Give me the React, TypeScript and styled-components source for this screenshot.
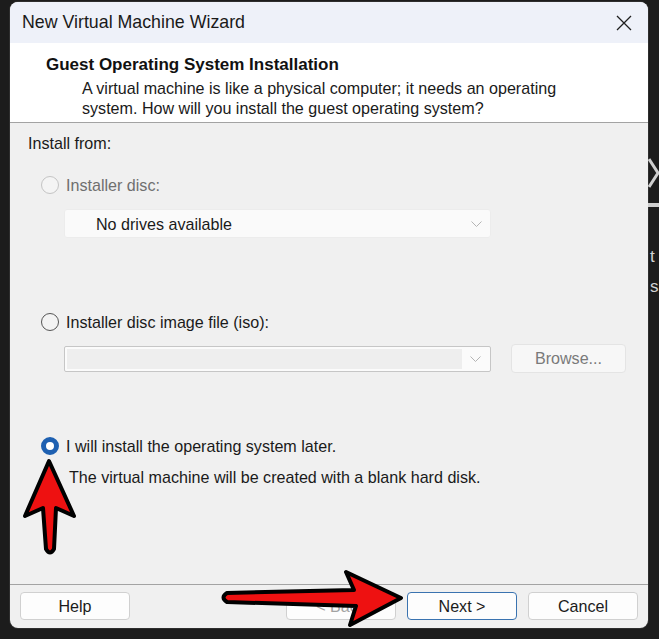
import React from "react";
import styled, { createGlobalStyle, css } from "styled-components";

const GlobalStyle = createGlobalStyle`
  html, body {
    margin: 0;
    padding: 0;
    background: #1c1c1c;
  }
  body {
    font-family: "Liberation Sans", Arial, sans-serif;
  }
`;

export default function App() {
  return (
    <>
      <GlobalStyle />
      <Page>
        <Dialog>
          <TitleBar>
            <WindowTitle>New Virtual Machine Wizard</WindowTitle>
            <CloseButton aria-label="Close">
              <svg width="16" height="16" viewBox="0 0 16 16">
                <path d="M1 1L15 15M15 1L1 15" stroke="#1f1f1f" strokeWidth="1.3" fill="none" />
              </svg>
            </CloseButton>
          </TitleBar>

          <Header>
            <HeaderTitle>Guest Operating System Installation</HeaderTitle>
            <HeaderText>
              A virtual machine is like a physical computer; it needs an operating
              <br />
              system. How will you install the guest operating system?
            </HeaderText>
          </Header>
          <Divider />

          <Content>
            <SectionLabel>Install from:</SectionLabel>

            <RadioRow $top={22}>
              <Radio $state="disabled" />
              <RadioLabel $disabled>Installer disc:</RadioLabel>
            </RadioRow>
            <DriveSelect>
              <span>No drives available</span>
              <Chevron />
            </DriveSelect>

            <RadioRow $top={74}>
              <Radio $state="off" />
              <RadioLabel>Installer disc image file (iso):</RadioLabel>
            </RadioRow>
            <FileRow>
              <IsoCombo>
                <IsoField />
                <ComboArrow>
                  <Chevron />
                </ComboArrow>
              </IsoCombo>
              <BrowseButton disabled>Browse...</BrowseButton>
            </FileRow>

            <RadioRow $top={63}>
              <Radio $state="on" />
              <RadioLabel>I will install the operating system later.</RadioLabel>
            </RadioRow>
            <Note>The virtual machine will be created with a blank hard disk.</Note>
          </Content>

          <Divider />
          <Footer>
            <Button>Help</Button>
            <ButtonGroup>
              <Button disabled>&lt; Back</Button>
              <Button $primary>Next &gt;</Button>
              <Button>Cancel</Button>
            </ButtonGroup>
          </Footer>
        </Dialog>

        <SideStrip>
          <svg width="11" height="30" viewBox="0 0 11 30">
            <path d="M1 1L10 15L1 29" stroke="#cfcfcf" strokeWidth="3" fill="none" />
          </svg>
          <SideBar />
          <SideGlyph $top={42}>t</SideGlyph>
          <SideGlyph $top={14}>s</SideGlyph>
        </SideStrip>

        <Annotations width="659" height="639" viewBox="0 0 659 639">
          <path
            d="M49 461L74 516L56 508L54 549Q50 556 46 549L43 508L25 516Z"
            fill="#ee1111"
            stroke="#000"
            strokeWidth="4"
            strokeLinejoin="round"
          />
          <path
            d="M401 598L350 625L356 606L227 602Q220 597.5 227 593L354 590L346 572Z"
            fill="#ee1111"
            stroke="#000"
            strokeWidth="4"
            strokeLinejoin="round"
          />
        </Annotations>
      </Page>
    </>
  );
}

function Chevron() {
  return (
    <svg width="11" height="6" viewBox="0 0 11 6">
      <path d="M0.5 0.5L5.5 5.5L10.5 0.5" stroke="#b4b4b4" strokeWidth="1" fill="none" />
    </svg>
  );
}

const Page = styled.div`
  position: relative;
  width: 659px;
  height: 639px;
  box-sizing: border-box;
  padding: 2px 0 0 10px;
  display: flex;
  align-items: flex-start;
  overflow: hidden;
  background: #1c1c1c;
`;

const Dialog = styled.div`
  width: 638px;
  height: 626px;
  display: flex;
  flex-direction: column;
  border-radius: 8px;
  overflow: hidden;
  background: #f0f0f0;
  box-shadow: 0 0 0 1px #2e2e2e;
`;

const TitleBar = styled.div`
  height: 41px;
  flex-shrink: 0;
  display: flex;
  align-items: center;
  justify-content: space-between;
  padding-left: 12px;
  background: #eef1f9;
`;

const WindowTitle = styled.div`
  font-size: 17.8px;
  color: #1a1a1a;
`;

const CloseButton = styled.div`
  width: 48px;
  height: 41px;
  display: flex;
  align-items: center;
  justify-content: center;
`;

const Header = styled.div`
  height: 79px;
  flex-shrink: 0;
  box-sizing: border-box;
  padding: 12px 0 0 36px;
  background: #ffffff;
`;

const HeaderTitle = styled.div`
  font-size: 17px;
  line-height: 20px;
  font-weight: 700;
  color: #111;
`;

const HeaderText = styled.div`
  margin: 3px 0 0 36px;
  font-size: 16.1px;
  line-height: 20px;
  color: #1a1a1a;
`;

const Divider = styled.div`
  height: 1px;
  flex-shrink: 0;
  background: #a3a3a3;
`;

const Content = styled.div`
  flex: 1;
  display: flex;
  flex-direction: column;
  align-items: flex-start;
  padding: 10px 0 0 18px;
  font-size: 16.1px;
  line-height: 20px;
  color: #1a1a1a;
`;

const SectionLabel = styled.div``;

const RadioRow = styled.div<{ $top: number }>`
  display: flex;
  align-items: center;
  gap: 7px;
  height: 20px;
  margin: ${(p) => p.$top}px 0 0 13px;
`;

const Radio = styled.span<{ $state: "disabled" | "off" | "on" }>`
  width: 18px;
  height: 18px;
  box-sizing: border-box;
  border-radius: 50%;
  flex-shrink: 0;
  ${(p) =>
    p.$state === "disabled" &&
    css`
      border: 1px solid #c4c4c4;
      background: #f4f4f4;
    `}
  ${(p) =>
    p.$state === "off" &&
    css`
      border: 1px solid #555;
      background: #f3f3f3;
    `}
  ${(p) =>
    p.$state === "on" &&
    css`
      border: 5px solid #1e60b1;
      background: #ffffff;
    `}
`;

const RadioLabel = styled.span<{ $disabled?: boolean }>`
  color: ${(p) => (p.$disabled ? "#6f6f6f" : "#1a1a1a")};
`;

const DriveSelect = styled.div`
  width: 427px;
  height: 29px;
  box-sizing: border-box;
  margin: 14px 0 0 36px;
  padding: 0 8px 0 31px;
  display: flex;
  align-items: center;
  justify-content: space-between;
  background: #fafafa;
  border: 1px solid #ececec;
  border-radius: 3px;
`;

const FileRow = styled.div`
  display: flex;
  align-items: center;
  gap: 20px;
  margin: 12px 0 0 36px;
`;

const IsoCombo = styled.div`
  width: 427px;
  height: 26px;
  box-sizing: border-box;
  padding: 2px;
  display: flex;
  background: #fbfbfb;
  border: 1px solid #c6c6c6;
  border-radius: 2px;
`;

const IsoField = styled.div`
  flex: 1;
  background: #eeeeee;
`;

const ComboArrow = styled.div`
  width: 26px;
  display: flex;
  align-items: center;
  justify-content: center;
`;

const BrowseButton = styled.button`
  width: 115px;
  height: 29px;
  background: #f7f7f7;
  border: 1px solid #e4e4e4;
  border-radius: 4px;
  font-family: inherit;
  font-size: 16.1px;
  color: #7a7a7a;
  padding: 0;
`;

const Note = styled.div`
  margin: 11px 0 0 41px;
`;

const Footer = styled.div`
  height: 43px;
  flex-shrink: 0;
  box-sizing: border-box;
  padding: 7px 10px 0 10px;
  display: flex;
  justify-content: space-between;
  align-items: flex-start;
`;

const ButtonGroup = styled.div`
  display: flex;
  gap: 11px;
`;

const Button = styled.button<{ $primary?: boolean }>`
  width: 110px;
  height: 28px;
  padding: 0;
  background: #fdfdfd;
  border: 1px solid ${(p) => (p.$primary ? "#3a73b0" : "#d0d0d0")};
  border-radius: 4px;
  font-family: inherit;
  font-size: 16.1px;
  color: #1b1b1b;

  &:disabled {
    color: #a2a2a2;
  }
`;

const SideStrip = styled.div`
  width: 11px;
  height: 100%;
  display: flex;
  flex-direction: column;
  overflow: hidden;
  padding-top: 156px;
  box-sizing: border-box;
`;

const SideBar = styled.div`
  height: 4px;
  margin-top: 15px;
  flex-shrink: 0;
  background: #cfcfcf;
`;

const SideGlyph = styled.div<{ $top: number }>`
  margin-top: ${(p) => p.$top}px;
  padding-left: 2px;
  font-size: 17px;
  line-height: 16px;
  color: #d2d2d2;
`;

const Annotations = styled.svg`
  position: absolute;
  left: 0;
  top: 0;
  pointer-events: none;
`;
